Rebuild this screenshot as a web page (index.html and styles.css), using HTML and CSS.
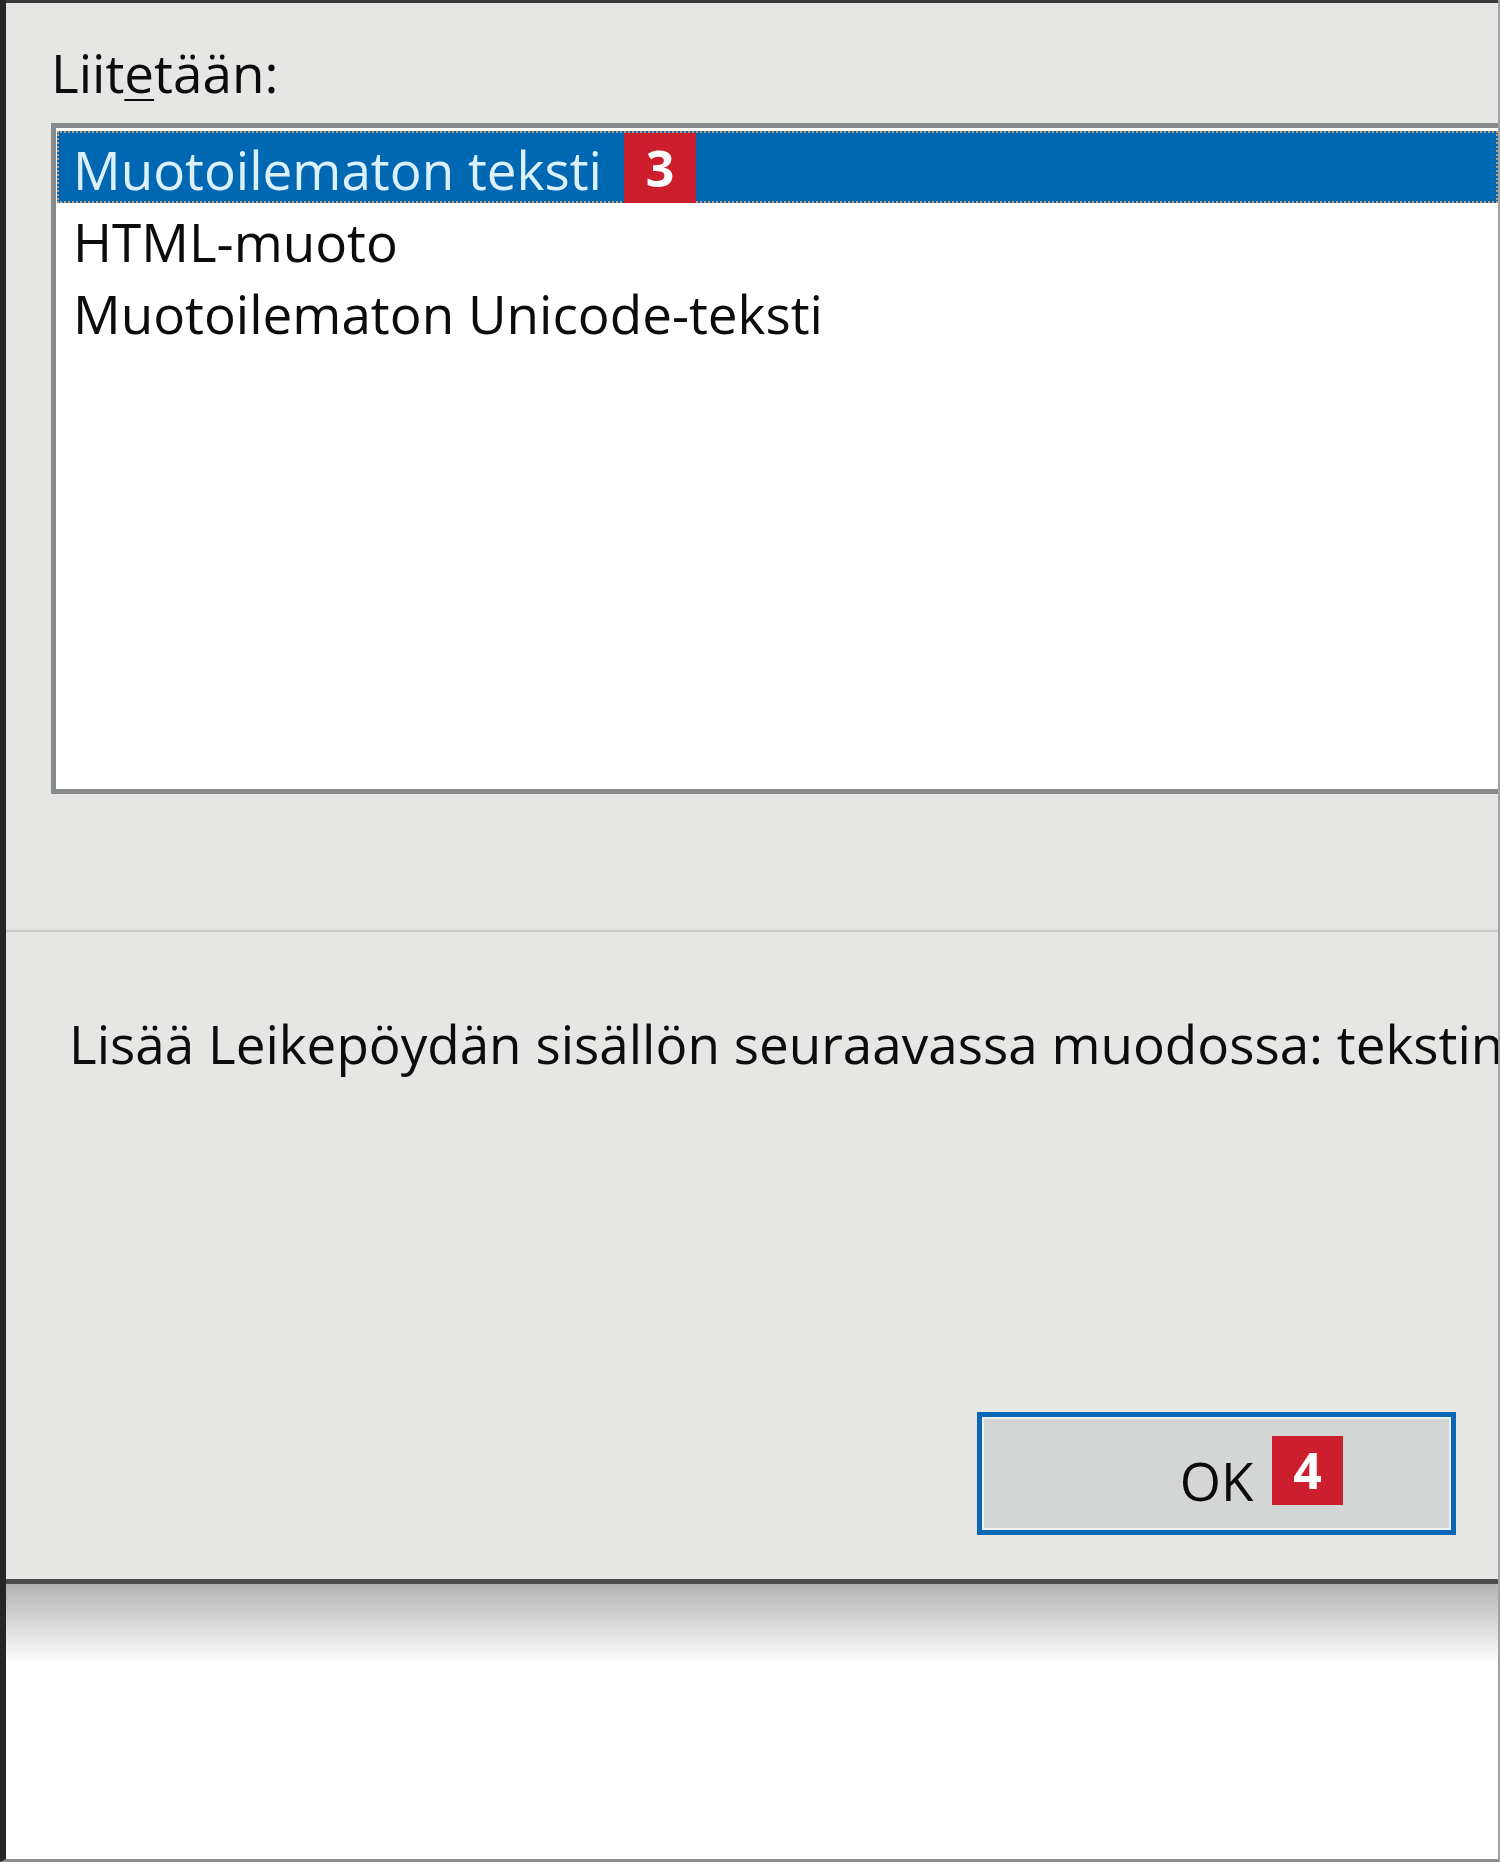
FILE: index.html
```html
<!DOCTYPE html>
<html>
<head>
   <meta charset="UTF-8">
   <link rel="stylesheet" href="styles.css">
</head>
<body>
<div class="screen">
   <div class="dialog">
      <div class="main">
         <div class="label">Liit<u>e</u>tään:</div>
         <div class="listbox">
            <div class="item selected"><span>Muotoilematon teksti</span><span class="badge">3</span></div>
            <div class="item">HTML-muoto</div>
            <div class="item">Muotoilematon Unicode-teksti</div>
         </div>
      </div>
      <div class="footer">
         <p class="description">Lisää Leikepöydän sisällön seuraavassa muodossa: tekstinä ilman muotoilua.</p>
         <div class="buttons">
            <button class="ok">OK<span class="badge">4</span></button>
         </div>
      </div>
   </div>
   <div class="shadow"></div>
</div>
</body>
</html>
```

FILE: styles.css
```css
body {
   margin: 0;
   background: #fff;
   font-family: "Open Sans", "Noto Sans", sans-serif;
   color: #0c0c0c;
}

.screen {
   height: 1862px;
   box-sizing: border-box;
   border-left: 6px solid #262626;
   border-right: 2px solid #a3a3a3;
   border-bottom: 3px solid #8d8d8d;
   overflow: hidden;
}

.dialog {
   background: #e6e7e5;
   border-top: 3px solid #3a3a3a;
   border-bottom: 5px solid #4d4d4d;
}

.main {
   padding: 34px 0 136px 45px;
   border-bottom: 2px solid #c9cbc9;
}

.label {
   font-size: 53px;
   line-height: 72px;
   height: 72px;
}

.label u {
   text-decoration-thickness: 2px;
   text-underline-offset: 6px;
}

.listbox {
   margin-top: 14px;
   height: 671px;
   box-sizing: border-box;
   background: #fff;
   border: 5px solid #878b8d;
   border-right: none;
   padding: 3px 0 0 1px;
}

.item {
   height: 72px;
   box-sizing: border-box;
   padding: 8px 0 0 16px;
   font-size: 53px;
   line-height: 62px;
   white-space: nowrap;
}

.item.selected {
   background: #0068b3;
   color: #dcf0fa;
   border: 2px dotted #c59b74;
   padding: 6px 0 0 14px;
   display: flex;
   align-items: flex-start;
}

.badge {
   display: inline-block;
   background: #cc1e2c;
   color: #fff;
   font-weight: 700;
   font-size: 50px;
   line-height: 70px;
   width: 72px;
   text-align: center;
}

.item .badge {
   margin: -6px 0 0 22px;
}

.footer {
   padding: 0 42px 44px 63px;
}

.description {
   margin: 0;
   padding-top: 76px;
   font-size: 53px;
   line-height: 72px;
   white-space: nowrap;
}

.buttons {
   display: flex;
   justify-content: flex-end;
   margin-top: 332px;
}

.ok {
   position: relative;
   width: 479px;
   height: 123px;
   box-sizing: border-box;
   border: 5px solid #0b67b5;
   box-shadow: inset 0 0 0 2px #eef1f2;
   background: #d4d6d5;
   font-family: inherit;
   font-size: 53px;
   color: #0c0c0c;
   padding: 14px 0 0;
}

.ok .badge {
   position: absolute;
   left: 290px;
   top: 19px;
   line-height: 69px;
   width: 71px;
}

.shadow {
   height: 80px;
   background: linear-gradient(#b2b3b2, #fff);
}
```
